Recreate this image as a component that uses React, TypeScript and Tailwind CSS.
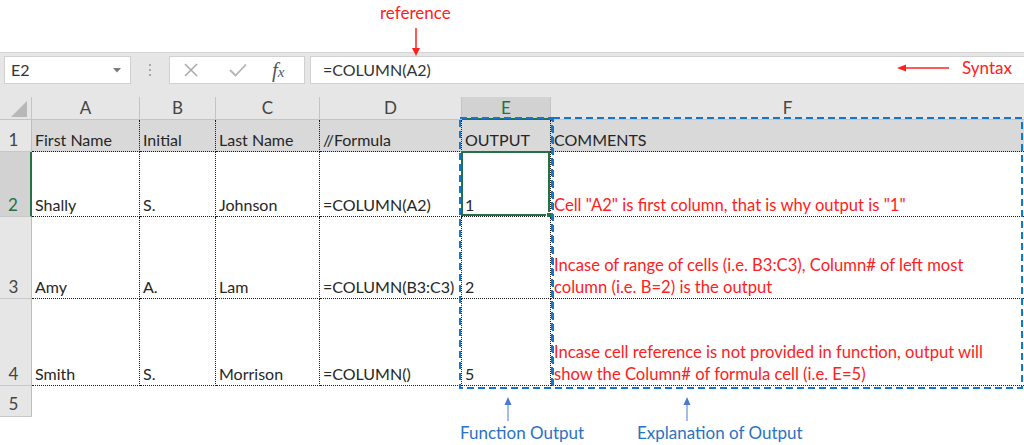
import React from 'react';

const colW = ['w-[108px]', 'w-[76px]', 'w-[104px]', 'w-[142px]', 'w-[89px]', 'w-[473px]'];
const letters = ['A', 'B', 'C', 'D', 'E', 'F'];

type Row = {
  n: string;
  h: string;
  cells: React.ReactNode[];
  gray?: boolean;
  sel?: boolean;
};

const red = 'text-[#ff2020] text-[16.6px]';

const rows: Row[] = [
  { n: '1', h: 'h-[32px]', gray: true, cells: ['First Name', 'Initial', 'Last Name', '//Formula', 'OUTPUT', 'COMMENTS'] },
  {
    n: '2',
    h: 'h-[65px]',
    sel: true,
    cells: ['Shally', 'S.', 'Johnson', '=COLUMN(A2)', '1', <span className={red}>Cell "A2" is first column, that is why output is "1"</span>],
  },
  {
    n: '3',
    h: 'h-[82px]',
    cells: [
      'Amy',
      'A.',
      'Lam',
      '=COLUMN(B3:C3)',
      '2',
      <span className={red}>
        Incase of range of cells (i.e. B3:C3), Column# of left most
        <br />
        column (i.e. B=2) is the output
      </span>,
    ],
  },
  {
    n: '4',
    h: 'h-[87px]',
    cells: [
      'Smith',
      'S.',
      'Morrison',
      '=COLUMN()',
      '5',
      <span className={red}>
        Incase cell reference is not provided in function, output will
        <br />
        show the Column# of formula cell (i.e. E=5)
      </span>,
    ],
  },
];

function Marquee({ w, h }: { w: number; h: number }) {
  return (
    <svg width={w} height={h} className="block">
      <rect x={1} y={1} width={w - 2} height={h - 2} fill="none" stroke="#1476cf" strokeWidth={2} strokeDasharray="7 4" />
    </svg>
  );
}

export default function App() {
  return (
    <div className="relative w-[1024px] h-[445px] overflow-hidden bg-white [font-family:Lato,'Open_Sans',sans-serif] text-[16px] text-[#262626]">
      {/* top annotation space */}
      <div className="h-[52px]" />

      {/* formula bar */}
      <div className="h-[45px] bg-[#e6e6e6] border-t border-[#d4d4d4] flex items-start pt-[3px] pl-[4px]">
        <div className="w-[127px] h-[28px] bg-white border border-[#d0d0d0] flex items-center justify-between pl-[6px] pr-[9px]">
          <span className="text-[16px] text-[#333]">E2</span>
          <svg width="8" height="5" viewBox="0 0 8 5">
            <polygon points="0,0 8,0 4,4.5" fill="#7a7a7a" />
          </svg>
        </div>
        <div className="w-[38px] h-[28px] flex flex-col items-center justify-center gap-[3px]">
          <span className="w-[2px] h-[2px] bg-[#a8a8a8]" />
          <span className="w-[2px] h-[2px] bg-[#a8a8a8]" />
          <span className="w-[2px] h-[2px] bg-[#a8a8a8]" />
        </div>
        <div className="w-[136px] h-[28px] bg-white border border-[#d0d0d0] flex items-center">
          <svg width="16" height="16" viewBox="0 0 16 16" className="ml-[13px]">
            <path d="M2 2 L14 14 M14 2 L2 14" stroke="#a9a9a9" strokeWidth="1.5" fill="none" />
          </svg>
          <svg width="20" height="16" viewBox="0 0 20 16" className="ml-[29px]">
            <path d="M2 8 L7.5 13.5 L18 2.5" stroke="#b3b3b3" strokeWidth="1.8" fill="none" />
          </svg>
          <span className="ml-[24px] [font-family:'Liberation_Serif',serif] italic text-[#595959] text-[21px] leading-none">
            f<span className="text-[15px]">x</span>
          </span>
        </div>
        <div className="ml-[5px] flex-1 h-[28px] bg-white border border-[#d0d0d0] border-r-0 flex items-center pl-[12px]">
          <span className="text-[16px] text-[#333]">=COLUMN(A2)</span>
        </div>
      </div>

      {/* column headers */}
      <div className="flex h-[23px] bg-[#e6e6e6]">
        <div className="w-[32px] shrink-0 border-r border-b border-[#c4c4c4] flex items-end justify-end pr-[4px] pb-[2px]">
          <svg width="16" height="16" viewBox="0 0 16 16">
            <polygon points="16,0 16,16 0,16" fill="#b8b8b8" />
          </svg>
        </div>
        {letters.map((l, i) => (
          <div
            key={l}
            className={`${colW[i]} shrink-0 flex items-center justify-center text-[17px] ${
              l === 'E'
                ? 'bg-[#d2d2d2] text-[#217346] border-b-2 border-b-[#217346] border-r border-r-[#c4c4c4]'
                : `text-[#444] border-b border-b-[#c4c4c4] ${l === 'F' ? '' : 'border-r border-r-[#c4c4c4]'}`
            }`}
          >
            {l}
          </div>
        ))}
      </div>

      {/* data rows */}
      {rows.map((r) => (
        <div key={r.n} className={`flex ${r.h}`}>
          <div
            className={`w-[32px] shrink-0 flex items-end justify-center pr-[4px] leading-[22px] text-[17px] border-b border-b-[#c8c8c8] ${
              r.sel ? 'bg-[#d2d2d2] text-[#217346] border-r-2 border-r-[#217346]' : 'bg-[#e6e6e6] text-[#444] border-r border-r-[#bdbdbd]'
            }`}
          >
            {r.n}
          </div>
          {r.cells.map((c, i) => (
            <div
              key={i}
              className={`${colW[i]} shrink-0 relative flex items-end px-[3px] leading-[22px] whitespace-nowrap border-b border-dotted border-[#1a1a1a] ${
                i === 5 ? '' : 'border-r'
              } ${r.gray ? 'bg-[#d9d9d9]' : 'bg-white'}`}
            >
              <div>{c}</div>
              {r.sel && i === 4 && (
                <div className="absolute -left-px -top-px right-0 bottom-0 border-2 border-[#217346]">
                  <div className="absolute -right-[4px] -bottom-[4px] w-[6px] h-[6px] bg-[#217346] border border-white" />
                </div>
              )}
            </div>
          ))}
        </div>
      ))}

      {/* row 5 */}
      <div className="flex h-[31px]">
        <div className="w-[32px] shrink-0 flex items-end justify-center pr-[4px] leading-[24px] text-[17px] bg-[#e6e6e6] text-[#444] border-r border-r-[#bdbdbd] border-b border-b-[#c8c8c8]">
          5
        </div>
      </div>

      {/* annotations */}
      <div className="absolute left-[380px] top-[2px] text-[17px] text-[#ff2020] leading-[22px]">reference</div>
      <svg className="absolute left-[410px] top-[28px]" width="12" height="29" viewBox="0 0 12 29">
        <line x1="6" y1="0" x2="6" y2="22" stroke="#ff2020" strokeWidth="1.5" />
        <polygon points="2,20 10,20 6,28" fill="#ff2020" />
      </svg>

      <svg className="absolute left-[897px] top-[63px]" width="53" height="10" viewBox="0 0 53 10">
        <polygon points="0,5 9,1.5 9,8.5" fill="#ff2020" />
        <line x1="8" y1="5" x2="52" y2="5" stroke="#ff2020" strokeWidth="1.5" />
      </svg>
      <div className="absolute left-[962px] top-[57px] text-[17px] text-[#ff2020] leading-[22px]">Syntax</div>

      <div className="absolute left-[459px] top-[117px] pointer-events-none">
        <Marquee w={94} h={272} />
      </div>
      <div className="absolute left-[552px] top-[117px] pointer-events-none">
        <Marquee w={471} h={272} />
      </div>

      <svg className="absolute left-[503px] top-[397px]" width="10" height="24" viewBox="0 0 10 24">
        <polygon points="5,0 1.5,8 8.5,8" fill="#4a7bd0" />
        <line x1="5" y1="7" x2="5" y2="24" stroke="#4a7bd0" strokeWidth="1" />
      </svg>
      <svg className="absolute left-[682px] top-[397px]" width="10" height="24" viewBox="0 0 10 24">
        <polygon points="5,0 1.5,8 8.5,8" fill="#4a7bd0" />
        <line x1="5" y1="7" x2="5" y2="24" stroke="#4a7bd0" strokeWidth="1" />
      </svg>
      <div className="absolute left-[460px] top-[422px] text-[17px] text-[#2a73c2] leading-[22px]">Function Output</div>
      <div className="absolute left-[637px] top-[422px] text-[17px] text-[#2a73c2] leading-[22px]">Explanation of Output</div>
    </div>
  );
}
